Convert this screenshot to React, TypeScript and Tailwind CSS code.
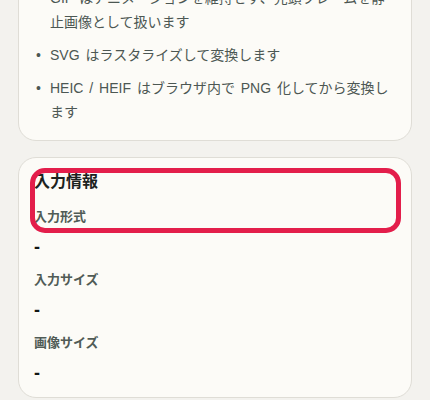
const notes = [
  'GIF はアニメーションを維持せず、先頭フレームを静止画像として扱います',
  'SVG はラスタライズして変換します',
  'HEIC / HEIF はブラウザ内で PNG 化してから変換します',
];

const fields = [
  { label: '入力形式', value: '-' },
  { label: '入力サイズ', value: '-' },
  { label: '画像サイズ', value: '-' },
];

export default function App() {
  return (
    <div
      className="min-h-[400px] bg-[#f3f2ee] px-[18px] pb-4 overflow-hidden"
      style={{ fontFamily: '"Liberation Sans", "Noto Sans CJK JP", sans-serif' }}
    >
      <div className="-mt-[31px] rounded-[18px] border border-[#dfddd6] bg-[#fcfbf7] px-[15px] pt-4 pb-[16px]">
        <ul className="space-y-[9px] text-[14px] leading-6 text-[#4c5753] [word-spacing:2px]">
          {notes.map(n => (
            <li key={n} className="flex gap-[7px]">
              <span className="w-[9px] shrink-0 text-center">•</span>
              <span>{n}</span>
            </li>
          ))}
        </ul>
      </div>

      <div className="relative mt-[16px] rounded-[18px] border border-[#dfddd6] bg-[#fcfbf7] px-[15px] pt-[12px] pb-[12px]">
        <h2 className="text-[16px] font-bold leading-6 text-[#1c2220]">入力情報</h2>
        <div className="mt-[13px] flex flex-col gap-[11px]">
          {fields.map(f => (
            <div key={f.label} className="flex flex-col gap-[8px]">
              <span className="text-[13px] font-bold leading-5 text-[#505b56]">{f.label}</span>
              <span className="text-[18px] font-bold leading-6 text-[#111614]">{f.value}</span>
            </div>
          ))}
        </div>
        <div className="pointer-events-none absolute left-[11px] top-[10px] h-[65px] w-[371px] rounded-[15px] border-[5px] border-[#e31e4b]" />
      </div>
    </div>
  );
}
